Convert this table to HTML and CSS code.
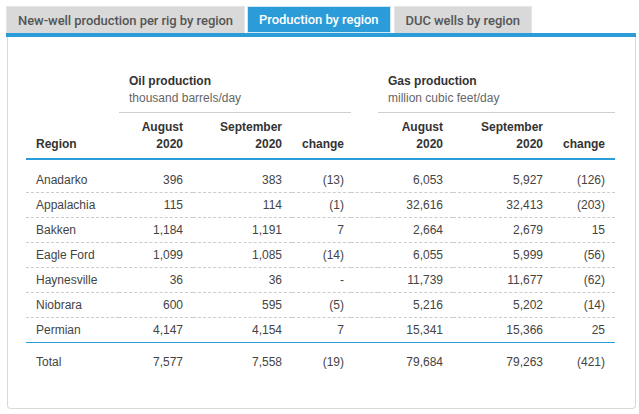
FILE: index.html
```html
<!DOCTYPE html>
<html>
<head>
<meta charset="utf-8">
<link rel="stylesheet" href="styles.css">
</head>
<body>
<div class="tabs">
  <div class="tab">New-well production per rig by region</div>
  <div class="tab active">Production by region</div>
  <div class="tab">DUC wells by region</div>
</div>
<div class="bar"></div>
<div class="panel">
  <table class="prod">
    <colgroup>
      <col class="c-reg"><col class="c-oaug"><col class="c-osep"><col class="c-ochg">
      <col class="c-sp"><col class="c-gaug"><col class="c-gsep"><col class="c-gchg">
    </colgroup>
    <thead>
      <tr class="group">
        <th class="blank"></th>
        <th colspan="3" class="grp">Oil production<br><span class="unit">thousand barrels/day</span></th>
        <th class="blank"></th>
        <th colspan="3" class="grp">Gas production<br><span class="unit">million cubic feet/day</span></th>
      </tr>
      <tr class="cols">
        <th class="reg">Region</th>
        <th>August<br>2020</th>
        <th>September<br>2020</th>
        <th class="ochg">change</th>
        <th></th>
        <th>August<br>2020</th>
        <th>September<br>2020</th>
        <th>change</th>
      </tr>
    </thead>
    <tbody>
      <tr class="first"><td class="reg">Anadarko</td><td>396</td><td>383</td><td class="ochg">(13)</td><td></td><td>6,053</td><td>5,927</td><td>(126)</td></tr>
      <tr><td class="reg">Appalachia</td><td>115</td><td>114</td><td class="ochg">(1)</td><td></td><td>32,616</td><td>32,413</td><td>(203)</td></tr>
      <tr><td class="reg">Bakken</td><td>1,184</td><td>1,191</td><td class="ochg">7</td><td></td><td>2,664</td><td>2,679</td><td>15</td></tr>
      <tr><td class="reg">Eagle Ford</td><td>1,099</td><td>1,085</td><td class="ochg">(14)</td><td></td><td>6,055</td><td>5,999</td><td>(56)</td></tr>
      <tr><td class="reg">Haynesville</td><td>36</td><td>36</td><td class="ochg">-</td><td></td><td>11,739</td><td>11,677</td><td>(62)</td></tr>
      <tr><td class="reg">Niobrara</td><td>600</td><td>595</td><td class="ochg">(5)</td><td></td><td>5,216</td><td>5,202</td><td>(14)</td></tr>
      <tr class="last"><td class="reg">Permian</td><td>4,147</td><td>4,154</td><td class="ochg">7</td><td></td><td>15,341</td><td>15,366</td><td>25</td></tr>
    </tbody>
    <tfoot>
      <tr class="total"><td class="reg">Total</td><td>7,577</td><td>7,558</td><td class="ochg">(19)</td><td></td><td>79,684</td><td>79,263</td><td>(421)</td></tr>
    </tfoot>
  </table>
</div>
</body>
</html>
```
FILE: styles.css
```css
html, body {
  margin: 0;
  padding: 0;
  background: #fff;
}
body {
  font-family: "Liberation Sans", Arial, sans-serif;
}
.tabs {
  display: flex;
  padding: 6px 0 0 6px;
}
.tab {
  box-sizing: border-box;
  height: 27px;
  padding: 0 11px;
  display: flex;
  align-items: center;
  font-family: Roboto, "Liberation Sans", sans-serif;
  font-weight: 500;
  font-size: 13px;
  letter-spacing: -0.05px;
  color: #555;
  background: #d9d9d9;
  border: 1px solid #e6e6e6;
  border-bottom: none;
  margin-right: 2px;
}
.tab.active {
  background: #2b9cd8;
  color: #fff;
  border: 1px solid #cde8f6;
  margin-right: 3px;
}
.bar {
  margin-left: 6px;
  width: 630px;
  height: 4px;
  background: #2b9cd8;
}
.panel {
  box-sizing: border-box;
  margin-left: 7px;
  width: 629px;
  height: 372px;
  border: 1px solid #d9d9d9;
  border-top: none;
  border-radius: 0 0 4px 4px;
  padding: 29px 20px 0 18px;
}
.prod {
  border-collapse: collapse;
  table-layout: fixed;
  width: 589px;
  font-size: 12px;
  color: #444;
}
.c-reg { width: 93px; }
.c-oaug { width: 74px; }
.c-osep { width: 99px; }
.c-ochg { width: 59px; }
.c-sp { width: 27px; }
.c-gaug { width: 75px; }
.c-gsep { width: 100px; }
.c-gchg { width: 62px; }
.prod th {
  font-weight: bold;
  color: #333;
  line-height: 17px;
}
.group th {
  padding: 7px 10px 5px;
  text-align: left;
}
.group th.grp {
  border-bottom: 1px solid #cfcfcf;
}
.unit {
  font-weight: normal;
  color: #666;
}
.cols th {
  padding: 6px 10px 5px;
  text-align: right;
  vertical-align: bottom;
  border-bottom: 2px solid #2b9cd8;
}
.prod .reg {
  text-align: left;
}
.prod td {
  padding: 4px 10px;
  line-height: 16px;
  text-align: right;
  border-bottom: 1px dashed #cccccc;
}
.prod .ochg {
  padding-right: 7px;
}
.prod tr.first td {
  padding-top: 12px;
}
.prod tr.last td {
  border-bottom: 1px solid #2b9cd8;
}
.prod tr.total td {
  padding-top: 11px;
  border-bottom: none;
}
```
